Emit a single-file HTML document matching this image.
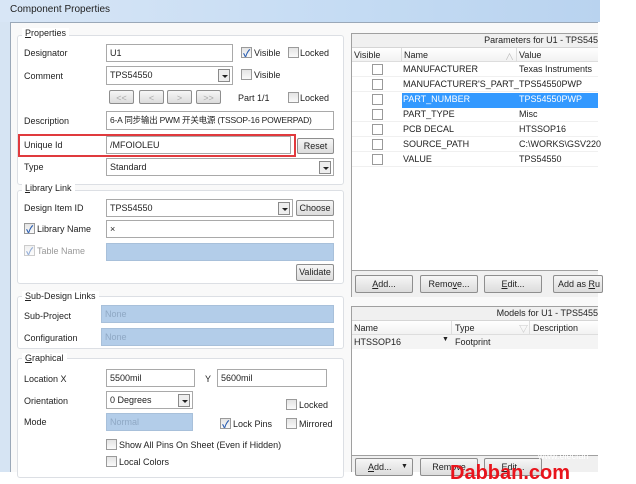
<!DOCTYPE html><html><head><meta charset="utf-8"><style>
*{box-sizing:border-box;margin:0;padding:0}
body{width:636px;height:472px;overflow:hidden;background:#fff;font-family:"Liberation Sans","Noto Sans CJK SC",sans-serif;font-size:9px;color:#222;position:relative}
.a{position:absolute;white-space:nowrap}
.in{position:absolute;background:#fff;border:1px solid #a9a9a9;padding:2px 3px;line-height:12px;font-size:9px;white-space:nowrap;overflow:hidden}
.bl{background:#b3cde9;border-color:#a8c0da;color:#8fa8c4}
.dd{position:absolute;width:12px;height:13px;border:1px solid #8a8a8a;background:#eee;top:2px;right:2px}
.dd:after{content:"";position:absolute;left:3px;top:5px;border-left:3px solid transparent;border-right:3px solid transparent;border-top:3px solid #222}
.btn{position:absolute;border:1px solid #8e8e8e;border-radius:2px;background:linear-gradient(#f6f6f6,#dcdcdc);text-align:center;font-size:9px;line-height:14px;white-space:nowrap;overflow:hidden}
.grp{position:absolute;border:1px solid #dcdfe4;border-radius:3px;background:#fff}
.cb{position:absolute;width:11px;height:11px;border:1px solid #9a9a9a;background:linear-gradient(#e4e4e4,#fafafa)}
.ck:after{content:"✓";position:absolute;left:1px;top:-3px;font-size:10px;color:#2a5db0;font-weight:bold}
.lbl{position:absolute;font-size:9px;white-space:nowrap}
.ul{text-decoration:underline}
</style></head><body>
<div class="a" style="left:0;top:0;width:600px;height:22px;background:linear-gradient(90deg,#d8e6f6,#c4dbf3 60%,#b9d3ef)"></div>
<div class="a" style="left:10px;top:4px;font-size:10px;color:#1e1e1e">Component Properties</div>
<div class="a" style="left:0;top:22px;width:10px;height:450px;background:#d6e4f3"></div>
<div class="a" style="left:10px;top:22px;width:588px;height:450px;background:#f9f9f9;border-left:1px solid #9aa8b8;border-top:1px solid #9aa8b8"></div>

<div class="grp" style="left:17px;top:35px;width:327px;height:150px"></div>
<div class="lbl" style="left:22px;top:28px;background:#fff;padding:0 3px"><span class="ul">P</span>roperties</div>
<div class="lbl" style="left:24px;top:48px">Designator</div>
<div class="in" style="left:106px;top:44px;width:127px;height:18px">U1</div>
<div class="cb ck" style="left:241px;top:47px"></div><div class="lbl" style="left:254px;top:48px">Visible</div>
<div class="cb" style="left:288px;top:47px"></div><div class="lbl" style="left:300px;top:48px">Locked</div>
<div class="lbl" style="left:24px;top:71px">Comment</div>
<div class="in" style="left:106px;top:66px;width:127px;height:19px">TPS54550<div class="dd"></div></div>
<div class="cb" style="left:241px;top:69px"></div><div class="lbl" style="left:254px;top:70px">Visible</div>
<div class="btn" style="left:109px;top:90px;width:25px;height:14px;color:#aaa">&lt;&lt;</div>
<div class="btn" style="left:139px;top:90px;width:25px;height:14px;color:#aaa">&lt;</div>
<div class="btn" style="left:167px;top:90px;width:25px;height:14px;color:#aaa">&gt;</div>
<div class="btn" style="left:196px;top:90px;width:25px;height:14px;color:#aaa">&gt;&gt;</div>
<div class="lbl" style="left:238px;top:93px">Part 1/1</div>
<div class="cb" style="left:288px;top:92px"></div><div class="lbl" style="left:300px;top:93px">Locked</div>
<div class="lbl" style="left:24px;top:116px">Description</div>
<div class="in" style="left:106px;top:111px;width:228px;height:19px;font-size:8.5px;letter-spacing:-0.2px">6-A 同步输出 PWM 开关电源 (TSSOP-16 POWERPAD)</div>
<div class="a" style="left:18px;top:134px;width:278px;height:23px;border:2px solid #e03a3e"></div>
<div class="lbl" style="left:24px;top:140px">Unique Id</div>
<div class="in" style="left:106px;top:136px;width:185px;height:18px">/MFOIOLEU</div>
<div class="btn" style="left:297px;top:138px;width:37px;height:16px">Reset</div>
<div class="lbl" style="left:24px;top:162px">Type</div>
<div class="in" style="left:106px;top:158px;width:228px;height:18px">Standard<div class="dd"></div></div>

<div class="grp" style="left:17px;top:190px;width:327px;height:94px"></div>
<div class="lbl" style="left:22px;top:183px;background:#fff;padding:0 3px"><span class="ul">L</span>ibrary Link</div>
<div class="lbl" style="left:24px;top:203px">Design Item ID</div>
<div class="in" style="left:106px;top:199px;width:187px;height:18px">TPS54550<div class="dd"></div></div>
<div class="btn" style="left:296px;top:200px;width:38px;height:16px">Choose</div>
<div class="cb ck" style="left:24px;top:223px"></div><div class="lbl" style="left:37px;top:224px">Library Name</div>
<div class="in" style="left:106px;top:220px;width:228px;height:18px">×</div>
<div class="cb ck" style="left:24px;top:245px;opacity:.5"></div><div class="lbl" style="left:37px;top:246px;color:#999">Table Name</div>
<div class="in bl" style="left:106px;top:243px;width:228px;height:18px"></div>
<div class="btn" style="left:296px;top:264px;width:38px;height:17px">Validate</div>

<div class="grp" style="left:17px;top:296px;width:327px;height:53px"></div>
<div class="lbl" style="left:22px;top:291px;background:#fff;padding:0 3px"><span class="ul">S</span>ub-Design Links</div>
<div class="lbl" style="left:24px;top:311px">Sub-Project</div>
<div class="in bl" style="left:101px;top:305px;width:233px;height:18px">None</div>
<div class="lbl" style="left:24px;top:333px">Configuration</div>
<div class="in bl" style="left:101px;top:328px;width:233px;height:18px">None</div>

<div class="grp" style="left:17px;top:358px;width:327px;height:120px"></div>
<div class="lbl" style="left:22px;top:353px;background:#fff;padding:0 3px"><span class="ul">G</span>raphical</div>
<div class="lbl" style="left:24px;top:374px">Location X</div>
<div class="in" style="left:106px;top:369px;width:89px;height:18px">5500mil</div>
<div class="lbl" style="left:205px;top:374px">Y</div>
<div class="in" style="left:217px;top:369px;width:110px;height:18px">5600mil</div>
<div class="lbl" style="left:24px;top:396px">Orientation</div>
<div class="in" style="left:106px;top:391px;width:87px;height:18px">0 Degrees<div class="dd"></div></div>
<div class="cb" style="left:286px;top:399px"></div><div class="lbl" style="left:299px;top:400px">Locked</div>
<div class="lbl" style="left:24px;top:417px">Mode</div>
<div class="in bl" style="left:106px;top:413px;width:87px;height:18px">Normal</div>
<div class="cb ck" style="left:220px;top:418px"></div><div class="lbl" style="left:233px;top:419px">Lock Pins</div>
<div class="cb" style="left:286px;top:418px"></div><div class="lbl" style="left:299px;top:419px">Mirrored</div>
<div class="cb" style="left:106px;top:439px"></div><div class="lbl" style="left:119px;top:440px">Show All Pins On Sheet (Even if Hidden)</div>
<div class="cb" style="left:106px;top:456px"></div><div class="lbl" style="left:119px;top:457px">Local Colors</div>

<div class="a" style="left:351px;top:33px;width:247px;height:264px;border:1px solid #a0a0a0;border-right:none;background:#fff"></div>
<div class="a" style="left:352px;top:34px;width:246px;height:14px;background:#f0f0f0;border-bottom:1px solid #d5d5d5;text-align:right;line-height:13px">Parameters for U1 - TPS545</div>
<div class="a" style="left:352px;top:48px;width:246px;height:14px;background:linear-gradient(#fff,#f2f2f2);border-bottom:1px solid #ddd"></div>
<div class="lbl" style="left:354px;top:50px">Visible</div>
<div class="a" style="left:401px;top:48px;width:1px;height:14px;background:#ddd"></div>
<div class="lbl" style="left:404px;top:50px">Name</div><div class="lbl" style="left:505px;top:50px;color:#bbb">∧</div>
<div class="a" style="left:516px;top:48px;width:1px;height:14px;background:#ddd"></div>
<div class="lbl" style="left:519px;top:50px">Value</div>
<div class="a" style="left:402px;top:93px;width:196px;height:15px;background:#3399ff"></div>
<div class="a" style="left:352px;top:62px;width:246px;font-size:9px;line-height:15px">
<div style="position:relative;height:15px;border-bottom:1px solid #f0f0f0"><div class="cb" style="left:20px;top:2px;background:#fff"></div><span style="position:absolute;left:51px">MANUFACTURER</span><span style="position:absolute;left:167px">Texas Instruments</span></div>
<div style="position:relative;height:15px;border-bottom:1px solid #f0f0f0"><div class="cb" style="left:20px;top:2px;background:#fff"></div><span style="position:absolute;left:51px">MANUFACTURER'S_PART_</span><span style="position:absolute;left:167px">TPS54550PWP</span></div>
<div style="position:relative;height:15px;color:#fff"><div class="cb" style="left:20px;top:2px;background:#fff"></div><span style="position:absolute;left:51px">PART_NUMBER</span><span style="position:absolute;left:167px">TPS54550PWP</span></div>
<div style="position:relative;height:15px;border-bottom:1px solid #f0f0f0"><div class="cb" style="left:20px;top:2px;background:#fff"></div><span style="position:absolute;left:51px">PART_TYPE</span><span style="position:absolute;left:167px">Misc</span></div>
<div style="position:relative;height:15px;border-bottom:1px solid #f0f0f0"><div class="cb" style="left:20px;top:2px;background:#fff"></div><span style="position:absolute;left:51px">PCB DECAL</span><span style="position:absolute;left:167px">HTSSOP16</span></div>
<div style="position:relative;height:15px;border-bottom:1px solid #f0f0f0"><div class="cb" style="left:20px;top:2px;background:#fff"></div><span style="position:absolute;left:51px">SOURCE_PATH</span><span style="position:absolute;left:167px">C:\WORKS\GSV220</span></div>
<div style="position:relative;height:15px;border-bottom:1px solid #f0f0f0"><div class="cb" style="left:20px;top:2px;background:#fff"></div><span style="position:absolute;left:51px">VALUE</span><span style="position:absolute;left:167px">TPS54550</span></div>
</div>
<div class="a" style="left:352px;top:270px;width:246px;height:27px;background:#f0f0f0;border-top:1px solid #a0a0a0"></div>
<div class="btn" style="left:355px;top:275px;width:58px;height:18px;line-height:16px"><span class="ul">A</span>dd...</div>
<div class="btn" style="left:420px;top:275px;width:58px;height:18px;line-height:16px">Remo<span class="ul">v</span>e...</div>
<div class="btn" style="left:484px;top:275px;width:58px;height:18px;line-height:16px"><span class="ul">E</span>dit...</div>
<div class="btn" style="left:553px;top:275px;width:50px;height:18px;line-height:16px;text-align:left;padding-left:4px">Add as <span class="ul">R</span>u</div>

<div class="a" style="left:351px;top:306px;width:247px;height:166px;border:1px solid #a0a0a0;border-right:none;background:#fff"></div>
<div class="a" style="left:352px;top:307px;width:246px;height:14px;background:#f0f0f0;border-bottom:1px solid #d5d5d5;text-align:right;line-height:13px">Models for U1 - TPS5455</div>
<div class="a" style="left:352px;top:321px;width:246px;height:14px;background:linear-gradient(#fff,#f2f2f2);border-bottom:1px solid #ddd"></div>
<div class="lbl" style="left:354px;top:323px">Name</div>
<div class="a" style="left:451px;top:321px;width:1px;height:14px;background:#ddd"></div>
<div class="lbl" style="left:455px;top:323px">Type</div><div class="lbl" style="left:519px;top:322px;color:#bbb">▽</div>
<div class="a" style="left:529px;top:321px;width:1px;height:14px;background:#ddd"></div>
<div class="lbl" style="left:533px;top:323px">Description</div>
<div class="a" style="left:352px;top:335px;width:246px;height:14px;background:#f4f4f4"></div>
<div class="lbl" style="left:354px;top:337px">HTSSOP16</div><div class="lbl" style="left:442px;top:336px;font-size:7px">▼</div>
<div class="lbl" style="left:455px;top:337px">Footprint</div>
<div class="a" style="left:352px;top:455px;width:246px;height:17px;background:#f0f0f0;border-top:1px solid #a0a0a0"></div>
<div class="btn" style="left:355px;top:458px;width:58px;height:18px;line-height:16px;text-align:left;padding-left:12px"><span class="ul">A</span>dd... <span style="position:absolute;left:45px;font-size:7px">▼</span></div>
<div class="btn" style="left:420px;top:458px;width:58px;height:18px;line-height:16px">Remove</div>
<div class="btn" style="left:484px;top:458px;width:58px;height:18px;line-height:16px"><span class="ul">E</span>dit...</div>
<div class="a" style="left:538px;top:451px;color:#fff;font-size:9px">www.elecfan</div>
<div class="a" style="left:450px;top:463px;color:#e8141c;font-size:20px;font-weight:bold;line-height:20px">Dabban.com</div>
</body></html>
